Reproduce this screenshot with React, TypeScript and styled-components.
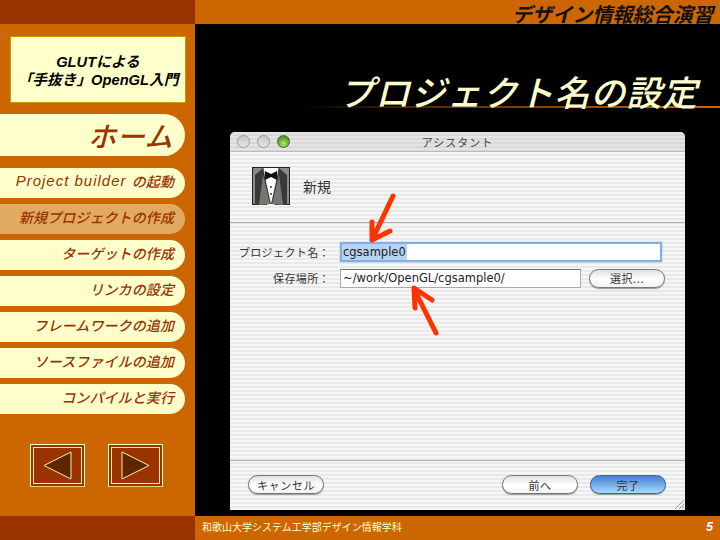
import React from "react";
import styled, { createGlobalStyle } from "styled-components";

const CJK = `"Noto Sans CJK JP", "Liberation Sans", sans-serif`;
const LATIN = `"Liberation Sans", "Noto Sans CJK JP", sans-serif`;
const ORANGE = "#cc6600";
const DARK = "#993300";
const CREAM = "#ffffcc";

const Global = createGlobalStyle`
  html, body { margin: 0; padding: 0; background: #000; }
  * { box-sizing: border-box; }
`;

const Page = styled.div`
  width: 720px;
  height: 540px;
  overflow: hidden;
  display: grid;
  grid-template-columns: 195px 525px;
  grid-template-rows: 24px 492px 24px;
  background: #000;
  font-family: ${LATIN};
`;
const Corner = styled.div`background: ${DARK};`;
const TopBar = styled.div`
  background: ${ORANGE};
  display: flex;
  align-items: center;
  justify-content: flex-end;
  padding: 3px 7px 0 0;
  color: #111;
  font: italic 700 20px/20px ${CJK};
  letter-spacing: 0.1px;
`;
const Side = styled.nav`
  background: ${ORANGE};
  padding-top: 12px;
  display: flex;
  flex-direction: column;
`;
const Course = styled.div`
  width: 176px;
  height: 67px;
  margin: 0 0 11px 10px;
  background: ${CREAM};
  border: 1px solid #cc9900;
  display: flex;
  flex-direction: column;
  align-items: center;
  justify-content: center;
  color: #000;
  font: italic 700 14.7px/18px ${LATIN};
  padding-top: 3px;
`;
const CourseLine = styled.span`white-space: nowrap;`;
const Home = styled.div`
  width: 185px;
  height: 42px;
  margin-bottom: 12px;
  border-radius: 0 21px 21px 0;
  background: ${CREAM};
  color: ${DARK};
  display: flex;
  align-items: center;
  justify-content: flex-end;
  padding: 0 12px 0 0;
  font: italic 500 28px/30px ${CJK};
  letter-spacing: 0.6px;
`;
const Items = styled.div`
  display: flex;
  flex-direction: column;
  gap: 6px;
`;
const Item = styled.div<{ $active?: boolean }>`
  width: 185px;
  height: 30px;
  border-radius: 0 15px 15px 0;
  background: ${(p) => (p.$active ? "#e2aa60" : CREAM)};
  color: ${DARK};
  display: flex;
  align-items: center;
  justify-content: flex-end;
  padding: 0 11px 4px 0;
  white-space: pre;
  font: italic 500 14px/20px ${CJK};
  letter-spacing: 0.1px;
`;
const ItemLatin = styled.span`
  font: italic 400 15px/20px ${LATIN};
  letter-spacing: 1px;
`;
const Arrows = styled.div`
  display: flex;
  gap: 23px;
  margin: 30px 0 0 30px;
`;
const ArrowBtn = styled.div`
  width: 55px;
  height: 43px;
  border: 1px solid ${CREAM};
  border-bottom-color: #f0d080;
  padding: 2px;
  background: ${DARK};
`;
const ArrowInner = styled.div`
  width: 100%;
  height: 100%;
  border: 1px solid #ffeeaa;
  background: ${DARK};
  display: flex;
  align-items: center;
  justify-content: center;
`;
const Main = styled.main`
  position: relative;
  background: #000;
  display: flex;
  flex-direction: column;
  padding-left: 35px;
`;
const Title = styled.h1`
  position: relative;
  margin: 47px 0 0 -35px;
  height: 61px;
  padding-right: 22px;
  text-align: right;
  color: ${CREAM};
  font: italic 500 35px/40px ${CJK};
  letter-spacing: 0.9px;
  white-space: nowrap;
  &::before {
    content: "";
    position: absolute;
    left: 0;
    right: 0;
    top: 35px;
    height: 2px;
    background: linear-gradient(90deg, #000 20%, #5a2c00 45%, ${ORANGE} 100%);
  }
`;
const TitleText = styled.span`position: relative;`;
const Win = styled.section`
  position: relative;
  width: 455px;
  height: 378px;
  border-radius: 5px 5px 0 0;
  overflow: hidden;
  background: repeating-linear-gradient(180deg, #f6f6f6 0 2px, #e9e9e9 2px 4px);
  display: flex;
  flex-direction: column;
  color: #333;
  font-family: ${CJK};
`;
const TitleBar = styled.div`
  height: 20px;
  flex: none;
  display: flex;
  align-items: center;
  padding-left: 7px;
  gap: 7px;
  border-bottom: 1px solid #bbb;
  background: repeating-linear-gradient(180deg, #e4e4e4 0 2px, #d8d8d8 2px 4px);
  position: relative;
`;
const Light = styled.span<{ $on?: boolean }>`
  width: 13px;
  height: 13px;
  border-radius: 50%;
  background: ${(p) => (p.$on ? "radial-gradient(circle at 50% 70%, #b8e86a, #4f9a2c 70%)" : "linear-gradient(#c4c4c4, #e8e8e8)")};
  border: 1px solid ${(p) => (p.$on ? "#3d6b33" : "#999")};
`;
const WinName = styled.span`
  position: absolute;
  left: 0;
  right: 0;
  text-align: center;
  font-size: 11px;
  letter-spacing: 1px;
  color: #444;
`;
const Head = styled.header`
  height: 71px;
  flex: none;
  display: flex;
  align-items: center;
  gap: 13px;
  padding: 0 0 2px 22px;
  border-bottom: 1px solid #aaa;
  font-size: 14px;
  color: #333;
`;
const Form = styled.div`
  flex: 1;
  display: flex;
  flex-direction: column;
  padding: 19px 19px 0 0;
  gap: 6px;
`;
const Row = styled.div`
  display: flex;
  align-items: center;
  height: 20px;
`;
const Label = styled.label`
  width: 110px;
  flex: none;
  padding-right: 10px;
  text-align: right;
  font-size: 11px;
  letter-spacing: 0.4px;
  color: #333;
  white-space: nowrap;
`;
const ActiveField = styled.div`
  width: 322px;
  height: 20px;
  background: #fff;
  border: 2px solid #82b0e2;
  box-shadow: 0 0 1px #5b8fd0;
  padding-left: 0;
  display: flex;
  align-items: center;
  font: 11.5px/16px "DejaVu Sans", sans-serif;
  color: #222;
`;
const Selected = styled.span`
  background: #b7d3f2;
  padding: 0 1px;
  height: 16px;
  line-height: 16px;
`;
const Field = styled.div`
  width: 241px;
  height: 19px;
  background: #fff;
  border: 1px solid #aaa;
  border-top-color: #777;
  padding-left: 2px;
  display: flex;
  align-items: center;
  font: 11.5px/16px "DejaVu Sans", sans-serif;
  color: #222;
  white-space: nowrap;
`;
const Pill = styled.button<{ $primary?: boolean }>`
  width: 76px;
  height: 19px;
  padding: 0;
  border-radius: 10px;
  border: 1px solid ${(p) => (p.$primary ? "#35609c" : "#777")};
  background: ${(p) =>
    p.$primary
      ? "linear-gradient(#4a80d0 0%, #6fa6e4 45%, #a8dcfa 100%)"
      : "linear-gradient(#e0e0e0 0%, #ffffff 55%, #f2f2f2 100%)"};
  color: #333;
  font: 11px/16px ${CJK};
  letter-spacing: 0.6px;
  box-shadow: 0 1px 1px #999;
  display: flex;
  align-items: center;
  justify-content: center;
`;
const SelectBtn = styled(Pill)`margin-left: 8px;`;
const Foot = styled.footer`
  height: 50px;
  flex: none;
  border-top: 1px solid #aaa;
  display: flex;
  align-items: flex-start;
  padding: 14px 19px 0 18px;
  gap: 12px;
`;
const Spacer = styled.div`flex: 1;`;
const Grip = styled.svg`
  position: absolute;
  right: 0;
  bottom: 0;
`;
const Overlay = styled.svg`
  position: absolute;
  inset: 0;
  pointer-events: none;
`;
const Bottom = styled.div`
  background: ${ORANGE};
  color: #ffffcc;
  display: flex;
  align-items: center;
  justify-content: space-between;
  padding: 0 7px 2px 7px;
  font: 10px/20px ${CJK};
`;
const PageNo = styled.span`
  font: italic 700 12px/20px ${LATIN};
  color: #fff;
`;

const items = ["新規プロジェクトの作成", "ターゲットの作成", "リンカの設定", "フレームワークの追加", "ソースファイルの追加", "コンパイルと実行"];

const Tux = () => (
  <svg width="38" height="38" viewBox="0 0 38 38" style={{ flex: "none" }}>
    <rect width="38" height="38" fill="#222" />
    <rect x="1" y="1" width="36" height="36" fill="#8a8a86" />
    <path d="M12 1h14l-3 37h-8z" fill="#fff" />
    <path d="M3 38V8L11 1l8 36z" fill="#3a3a38" />
    <path d="M35 38V8L27 1l-8 36z" fill="#3a3a38" />
    <path d="M7 38L11 8l7 29z" fill="#767672" />
    <path d="M31 38L27 8l-7 29z" fill="#767672" />
    <path d="M13 4l6 3 6-3v9l-6-3-6 3z" fill="#111" />
    <circle cx="19" cy="20" r="1" fill="#333" />
    <circle cx="19" cy="27" r="1" fill="#333" />
  </svg>
);

const RedArrow = ({ d }: { d: string }) => (
  <path d={d} fill="none" stroke="#ff3300" strokeWidth="5" strokeLinecap="round" strokeLinejoin="round" />
);

export default function App() {
  return (
    <>
      <Global />
      <Page>
        <Corner />
        <TopBar>デザイン情報総合演習</TopBar>
        <Side>
          <Course>
            <CourseLine>GLUTによる</CourseLine>
            <CourseLine>「手抜き」OpenGL入門</CourseLine>
          </Course>
          <Home>ホーム</Home>
          <Items>
            <Item><ItemLatin>Project builder </ItemLatin>の起動</Item>
            {items.map((t, i) => (
              <Item key={t} $active={i === 0}>{t}</Item>
            ))}
          </Items>
          <Arrows>
            <ArrowBtn>
              <ArrowInner>
                <svg width="29" height="29" viewBox="0 0 29 29">
                  <path d="M1 14.5L28 1v27z" fill="#5c2600" stroke="#ffeeaa" />
                </svg>
              </ArrowInner>
            </ArrowBtn>
            <ArrowBtn>
              <ArrowInner>
                <svg width="29" height="29" viewBox="0 0 29 29">
                  <path d="M28 14.5L1 1v27z" fill="#5c2600" stroke="#ffeeaa" />
                </svg>
              </ArrowInner>
            </ArrowBtn>
          </Arrows>
        </Side>
        <Main>
          <Title><TitleText>プロジェクト名の設定</TitleText></Title>
          <Win>
            <TitleBar>
              <Light />
              <Light />
              <Light $on />
              <WinName>アシスタント</WinName>
            </TitleBar>
            <Head>
              <Tux />
              新規
            </Head>
            <Form>
              <Row>
                <Label>プロジェクト名：</Label>
                <ActiveField><Selected>cgsample0</Selected></ActiveField>
              </Row>
              <Row>
                <Label>保存場所：</Label>
                <Field>~/work/OpenGL/cgsample0/</Field>
                <SelectBtn>選択...</SelectBtn>
              </Row>
            </Form>
            <Foot>
              <Pill>キャンセル</Pill>
              <Spacer />
              <Pill>前へ</Pill>
              <Pill $primary>完了</Pill>
            </Foot>
            <Grip width="12" height="12" viewBox="0 0 12 12">
              <path d="M11 2L2 11M11 6L6 11M11 9L9 11" stroke="#999" />
            </Grip>
            <Overlay width="455" height="378" viewBox="0 0 455 378">
              <RedArrow d="M163 64L143 106M142 90L142 108L160 99" />
              <RedArrow d="M206 201L184 157M185 176L184 156L202 168" />
            </Overlay>
          </Win>
        </Main>
        <Corner />
        <Bottom>
          <span>和歌山大学システム工学部デザイン情報学科</span>
          <PageNo>5</PageNo>
        </Bottom>
      </Page>
    </>
  );
}
